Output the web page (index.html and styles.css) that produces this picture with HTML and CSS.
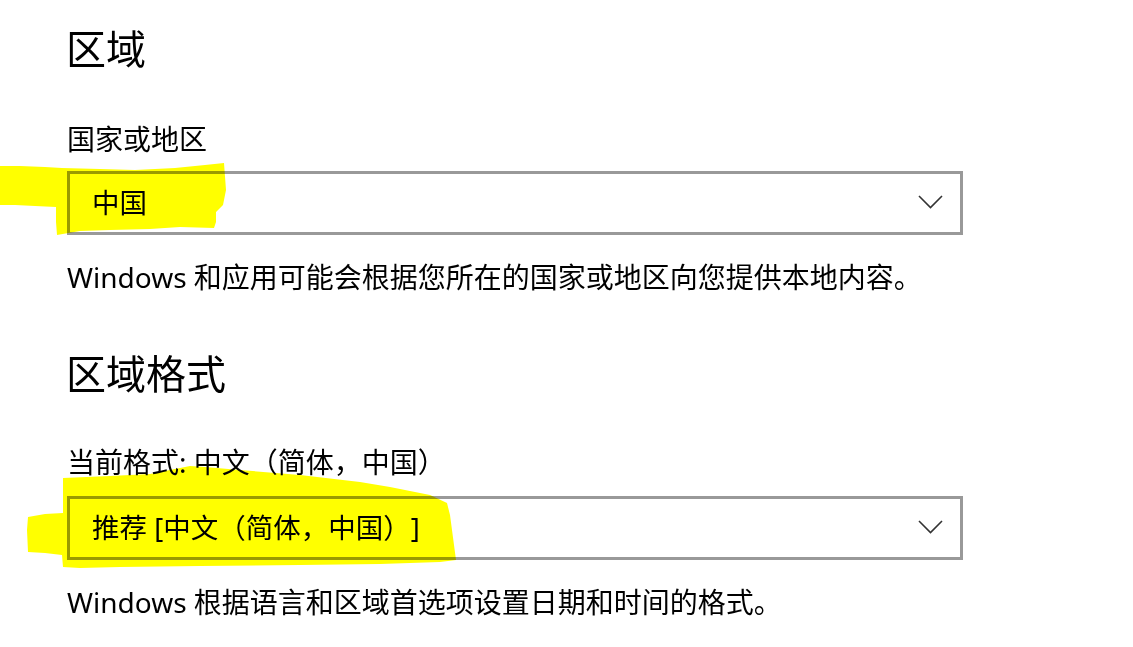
FILE: index.html
```html
<!DOCTYPE html>
<html lang="zh-CN">
<head>
<meta charset="utf-8">
<title>区域</title>
<link rel="stylesheet" href="styles.css">
</head>
<body>
<main class="page">
  <section class="section">
    <h1 class="heading">区域</h1>
    <div class="label">国家或地区</div>
    <div class="select">
      <span class="select-text">中国</span>
      <svg class="chevron" width="25" height="14" viewBox="0 0 25 14"><path d="M1 1 L12.5 12.5 L24 1" fill="none" stroke="#333" stroke-width="1.6"/></svg>
    </div>
    <p class="desc">Windows 和应用可能会根据您所在的国家或地区向您提供本地内容。</p>
  </section>
  <section class="section second">
    <h1 class="heading">区域格式</h1>
    <div class="label label2">当前格式: 中文（简体，中国）</div>
    <div class="select select2">
      <span class="select-text">推荐 [中文（简体，中国）]</span>
      <svg class="chevron" width="25" height="14" viewBox="0 0 25 14"><path d="M1 1 L12.5 12.5 L24 1" fill="none" stroke="#333" stroke-width="1.6"/></svg>
    </div>
    <p class="desc desc2">Windows 根据语言和区域首选项设置日期和时间的格式。</p>
  </section>
</main>
<svg class="marker" width="1133" height="647" viewBox="0 0 1133 647">
  <path d="M0 166 L20 166 L45 167 L62 168 L100 169 L135 170 L175 168 L205 165 L224 163 L226 190 L223 205 L216 212 L216 222 L214 228 L180 227 L150 229 L110 230 L80 231 L57 235 L56 222 L56 207 L35 206 L15 205 L0 205 Z" fill="#ffff00"/>
  <path d="M63 478 L110 476 L150 474 L170 470 L190 466 L205 467 L240 470 L300 475 L360 482 L390 487 L430 495 L447 503 L450 515 L454 545 L456 560 L440 562 L380 564 L300 565 L200 566 L120 567 L80 568 L63 567 L62 555 L45 553 L28 552 L27 530 L28 517 L45 514 L63 513 Z" fill="#ffff00"/>
</svg>
</body>
</html>
```
FILE: styles.css
```css
html, body {
  margin: 0;
  padding: 0;
  background: #ffffff;
}

body {
  font-family: "Noto Sans", "Noto Sans CJK SC", sans-serif;
  color: #000000;
  width: 1133px;
  height: 647px;
  overflow: hidden;
  position: relative;
  text-spacing-trim: space-all;
}

.page {
  padding-left: 67px;
  padding-top: 29px;
}

.section {
  display: flex;
  flex-direction: column;
  align-items: flex-start;
}

.heading {
  margin: 0 0 0 -1px;
  font-size: 40px;
  line-height: 40px;
  font-weight: 400;
}

.label {
  margin-top: 56px;
  font-size: 28px;
  line-height: 28px;
}

.label2 {
  margin-top: 54px;
}

.select {
  margin-top: 18px;
  box-sizing: border-box;
  width: 896px;
  height: 64px;
  border: 3px solid #999999;
  display: flex;
  align-items: center;
  justify-content: space-between;
  padding: 0 17px 0 22px;
}

.select2 {
  margin-top: 20px;
}

.select-text {
  font-size: 27.5px;
  line-height: 28px;
  margin-top: 0;
}

.chevron {
  display: block;
  margin-top: -2px;
}

.desc {
  margin: 28px 0 0 0;
  font-size: 28px;
  line-height: 28px;
}

.desc2 {
  margin-top: 28px;
}

.second {
  margin-top: 63px;
}

.marker {
  position: absolute;
  left: 0;
  top: 0;
  mix-blend-mode: multiply;
  pointer-events: none;
}
```
